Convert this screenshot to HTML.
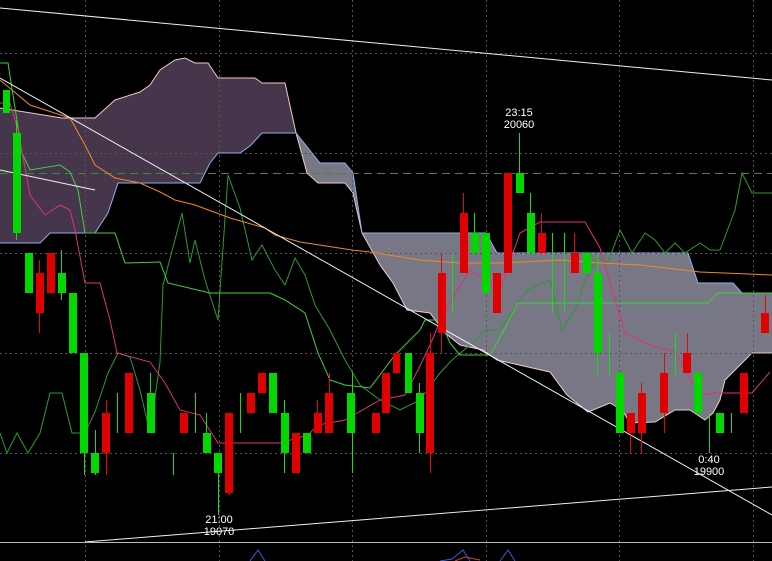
<!DOCTYPE html>
<html><head><meta charset="utf-8"><style>
html,body{margin:0;padding:0;background:#000;}
svg{display:block;}
text{font-family:"Liberation Sans",sans-serif;font-size:11px;fill:#fff;}
</style></head><body>
<svg width="772" height="561" viewBox="0 0 772 561" xmlns="http://www.w3.org/2000/svg">
<rect width="772" height="561" fill="#000"/>
<!-- clouds -->
<polygon fill="#46364b" points="0,108 62,118 95,118 115,100 140,92 150,85 160,70 175,60 185,58 195,63 208,63 218,78 255,78 262,83 285,83 296,133 262,133 250,146 240,153 218,153 210,163 200,183 118,183 108,213 95,233 50,233 40,243 0,243"/>
<polygon fill="#777786" points="296,133 320,163 345,163 353,173 362,233 486,233 497,253 688,253 698,283 733,283 742,293 772,293 772,353 752,353 725,380 720,400 713,413 705,420 690,410 675,410 655,422 630,423 622,410 610,403 588,412 567,395 550,372 497,360 483,350 460,345 445,333 430,313 407,310 393,283 380,265 362,233 353,193 345,183 318,183 307,173"/>
<polyline fill="none" stroke="#f0c8d0" stroke-width="1" points="0,108 62,118 95,118 115,100 140,92 150,85 160,70 175,60 185,58 195,63 208,63 218,78 255,78 262,83 285,83 296,133 307,173 318,183 345,183 353,193 362,233 380,265 393,283 407,310 430,313 445,333 460,345 483,350 497,360 550,372 567,395 588,412 610,403 622,410 630,423 655,422 675,410 690,410 705,420 713,413 720,400 725,380 752,353 772,353"/>
<polyline fill="none" stroke="#90b0e8" stroke-width="1" points="0,243 40,243 50,233 95,233 108,213 118,183 200,183 210,163 218,153 240,153 250,146 262,133 296,133 320,163 345,163 353,173 362,233 486,233 497,253 688,253 698,283 733,283 742,293 772,293"/>
<!-- grid -->
<g stroke="#555" stroke-width="1" stroke-dasharray="2,3">
<line x1="0" y1="53.5" x2="772" y2="53.5"/><line x1="0" y1="153.5" x2="772" y2="153.5"/><line x1="0" y1="253.5" x2="772" y2="253.5"/><line x1="0" y1="353.5" x2="772" y2="353.5"/><line x1="0" y1="453.5" x2="772" y2="453.5"/>
<line x1="85.5" y1="0" x2="85.5" y2="561"/><line x1="219.5" y1="0" x2="219.5" y2="561"/><line x1="352.5" y1="0" x2="352.5" y2="561"/><line x1="486.5" y1="0" x2="486.5" y2="561"/><line x1="619.5" y1="0" x2="619.5" y2="561"/><line x1="753.5" y1="0" x2="753.5" y2="561"/>
</g>
<line x1="0" y1="173.5" x2="772" y2="173.5" stroke="#3c8a3c" stroke-dasharray="8,5"/>
<!-- chikou -->
<polyline fill="none" stroke="#2f9a2f" points="0,433 7,453 17,433 28,453 40,433 50,393 62,393 72,433 85,433 95,412 108,373 118,353 130,357 140,390 150,433 160,362 163,285 182,213 190,263 195,240 205,280 218,320 228,175 240,208 252,260 262,245 275,270 285,285 295,258 305,275 315,305 330,330 345,360 360,385 380,400 400,410 420,400 440,373 452,360 470,345 485,330 500,330 520,300 528,290 550,280 562,330 575,310 585,280 598,258 608,262 620,230 632,253 645,233 655,240 665,253 675,243 685,253 700,243 710,250 720,250 735,210 742,173 752,193 772,193"/>
<!-- tenkan -->
<polyline fill="none" stroke="#3ed03e" points="0,63 8,63 22,153 30,170 60,165 70,172 78,190 85,233 115,233 125,263 160,262 168,283 210,293 270,293 285,300 305,313 318,353 330,380 345,385 370,388 395,355 420,330 425,320 440,320 450,343 460,355 490,355 497,343 518,303 708,303 718,293 772,293"/>
<!-- kijun -->
<polyline fill="none" stroke="#e0307a" points="0,103 10,103 18,130 30,195 45,215 60,205 70,210 75,230 85,283 100,283 110,320 117,353 150,362 165,383 180,410 200,415 218,443 280,443 308,435 318,425 345,420 380,400 405,395 418,370 430,345 445,310 470,270 490,283 500,290 520,233 540,222 585,222 600,248 615,300 625,333 650,345 675,352 690,378 700,395 715,393 752,393 770,372"/>
<!-- orange MA -->
<polyline fill="none" stroke="#f08a20" points="0,80 30,105 70,118 85,145 95,165 115,178 140,183 160,192 175,200 195,205 230,218 265,228 275,235 300,242 352,250 370,252 420,260 460,263 500,263 560,260 600,263 640,265 700,272 772,275"/>
<!-- white lines -->
<g stroke="#f0f0f0" stroke-width="1" fill="none">
<line x1="0" y1="8" x2="772" y2="80"/>
<line x1="0" y1="78" x2="772" y2="515"/>
<line x1="0" y1="170" x2="95" y2="190"/>
<line x1="85" y1="542" x2="772" y2="487"/>
</g>
<line x1="0" y1="542.5" x2="772" y2="542.5" stroke="#bbb"/>
<!-- wicks -->
<g stroke-width="1">
<g stroke="#1ed81e">
<line x1="16.5" y1="120" x2="16.5" y2="240"/><line x1="61.5" y1="250" x2="61.5" y2="300"/><line x1="84.5" y1="353" x2="84.5" y2="475"/><line x1="95.5" y1="430" x2="95.5" y2="475"/><line x1="117.5" y1="393" x2="117.5" y2="433"/><line x1="150.5" y1="373" x2="150.5" y2="433"/><line x1="173.5" y1="453" x2="173.5" y2="475"/><line x1="195.5" y1="393" x2="195.5" y2="433"/><line x1="206.5" y1="413" x2="206.5" y2="453"/><line x1="218.5" y1="453" x2="218.5" y2="515"/><line x1="240.5" y1="393" x2="240.5" y2="433"/><line x1="284.5" y1="400" x2="284.5" y2="473"/><line x1="352.5" y1="373" x2="352.5" y2="473"/><line x1="419.5" y1="383" x2="419.5" y2="453"/><line x1="452.5" y1="253" x2="452.5" y2="313"/><line x1="474.5" y1="213" x2="474.5" y2="253"/><line x1="519.5" y1="133" x2="519.5" y2="193"/><line x1="530.5" y1="193" x2="530.5" y2="253"/><line x1="552.5" y1="233" x2="552.5" y2="313"/><line x1="564.5" y1="233" x2="564.5" y2="313"/><line x1="597.5" y1="253" x2="597.5" y2="375"/><line x1="609.5" y1="333" x2="609.5" y2="375"/><line x1="675.5" y1="333" x2="675.5" y2="375"/><line x1="709.5" y1="413" x2="709.5" y2="453"/><line x1="731.5" y1="413" x2="731.5" y2="433"/>
</g>
<g stroke="#e00a0a">
<line x1="39.5" y1="260" x2="39.5" y2="333"/><line x1="106.5" y1="400" x2="106.5" y2="475"/><line x1="229.5" y1="413" x2="229.5" y2="495"/><line x1="317.5" y1="400" x2="317.5" y2="433"/><line x1="329.5" y1="373" x2="329.5" y2="433"/><line x1="430.5" y1="333" x2="430.5" y2="473"/><line x1="441.5" y1="253" x2="441.5" y2="353"/><line x1="463.5" y1="193" x2="463.5" y2="273"/><line x1="541.5" y1="213" x2="541.5" y2="253"/><line x1="574.5" y1="233" x2="574.5" y2="273"/><line x1="630.5" y1="413" x2="630.5" y2="453"/><line x1="641.5" y1="383" x2="641.5" y2="453"/><line x1="664.5" y1="353" x2="664.5" y2="433"/><line x1="687.5" y1="333" x2="687.5" y2="373"/><line x1="765.5" y1="295" x2="765.5" y2="333"/>
</g>
</g>
<!-- bodies -->
<g fill="#00d800">
<rect x="3" y="90" width="7" height="23"/><rect x="13" y="133" width="8" height="100"/><rect x="25" y="253" width="8" height="40"/><rect x="58" y="273" width="8" height="20"/><rect x="69" y="293" width="8" height="60"/><rect x="80" y="353" width="8" height="100"/><rect x="91" y="453" width="8" height="20"/><rect x="147" y="393" width="8" height="40"/><rect x="203" y="433" width="8" height="20"/><rect x="214" y="453" width="8" height="20"/><rect x="269" y="373" width="8" height="40"/><rect x="281" y="413" width="8" height="40"/><rect x="303" y="433" width="8" height="20"/><rect x="347" y="393" width="8" height="40"/><rect x="405" y="353" width="7" height="40"/><rect x="416" y="393" width="8" height="40"/><rect x="471" y="233" width="8" height="20"/><rect x="482" y="233" width="8" height="60"/><rect x="516" y="173" width="8" height="20"/><rect x="527" y="213" width="8" height="40"/><rect x="583" y="253" width="8" height="20"/><rect x="594" y="273" width="8" height="80"/><rect x="616" y="373" width="8" height="60"/><rect x="694" y="373" width="8" height="40"/><rect x="716" y="413" width="8" height="20"/>
</g>
<g fill="#e00000">
<rect x="36" y="273" width="8" height="40"/><rect x="47" y="253" width="8" height="40"/><rect x="102" y="413" width="8" height="40"/><rect x="125" y="373" width="8" height="60"/><rect x="180" y="413" width="8" height="20"/><rect x="225" y="413" width="8" height="80"/><rect x="247" y="393" width="8" height="20"/><rect x="258" y="373" width="8" height="20"/><rect x="292" y="433" width="8" height="40"/><rect x="314" y="413" width="8" height="20"/><rect x="325" y="393" width="8" height="40"/><rect x="372" y="413" width="8" height="20"/><rect x="382" y="373" width="8" height="40"/><rect x="393" y="353" width="7" height="20"/><rect x="426" y="353" width="8" height="100"/><rect x="438" y="273" width="8" height="60"/><rect x="460" y="213" width="8" height="60"/><rect x="493" y="273" width="8" height="40"/><rect x="504" y="173" width="8" height="100"/><rect x="538" y="233" width="8" height="20"/><rect x="571" y="253" width="8" height="20"/><rect x="627" y="413" width="8" height="20"/><rect x="638" y="393" width="8" height="40"/><rect x="660" y="373" width="8" height="40"/><rect x="683" y="353" width="8" height="20"/><rect x="740" y="373" width="8" height="40"/><rect x="761" y="313" width="8" height="20"/>
</g>
<!-- bottom indicator bits -->
<polyline fill="none" stroke="#3a5ae0" points="250,561 258,550 265,561"/>
<polyline fill="none" stroke="#3a5ae0" points="395,561 395,561"/>
<polyline fill="none" stroke="#3a5ae0" points="440,561 452,559 463,550 470,561"/>
<polyline fill="none" stroke="#3a5ae0" points="500,561 508,550 515,561"/>
<polyline fill="none" stroke="#d04040" points="455,561 465,557 480,560"/>
<!-- labels -->
<text x="519" y="116" text-anchor="middle">23:15</text>
<text x="519" y="128" text-anchor="middle">20060</text>
<text x="219" y="523" text-anchor="middle">21:00</text>
<text x="219" y="535" text-anchor="middle">19070</text>
<text x="709" y="463" text-anchor="middle">0:40</text>
<text x="709" y="475" text-anchor="middle">19900</text>
</svg>
</body></html>
